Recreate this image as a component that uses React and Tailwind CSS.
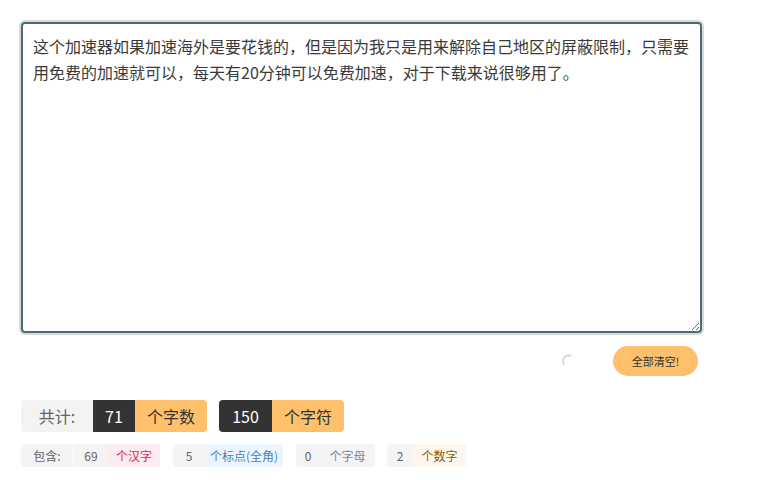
import { useState } from 'react'

const TEXT =
  '这个加速器如果加速海外是要花钱的，但是因为我只是用来解除自己地区的屏蔽限制，只需要用免费的加速就可以，每天有20分钟可以免费加速，对于下载来说很够用了。'

const font = { fontFamily: '"Microsoft YaHei", "Noto Sans CJK SC", "Noto Sans", sans-serif' }

// small tag pair: number + label
const Tag = ({ num, label, numW, labelW, labelClass }) => (
  <div className="flex h-[23px] items-stretch rounded-[3px] overflow-hidden text-[12px]">
    <span className={`flex items-center justify-center bg-[#f4f4f5] text-[#606266] ${numW}`}>{num}</span>
    <span className={`flex items-center justify-center ${labelW} ${labelClass}`}>{label}</span>
  </div>
)

const Spinner = () => (
  <svg width="14" height="14" viewBox="0 0 14 14" className="mr-[37px]">
    <path d="M2 10 A5.5 5.5 0 0 1 8.5 1.8" fill="none" stroke="#d9d9d9" strokeWidth="2" strokeLinecap="round" />
  </svg>
)

export default function App() {
  const [text, setText] = useState(TEXT)

  return (
    <div className="min-h-screen bg-white pl-[21px] pt-[22px]" style={font}>
      <div className="w-[681px]">
        {/* Input */}
        <textarea
          value={text}
          onChange={(e) => setText(e.target.value)}
          className="block h-[311px] w-full rounded-[4px] border-2 border-[#4e6a72] pt-[9px] pl-[10px] pr-[6px] text-[16px] leading-[26px] text-[#3a3a3a] shadow-[0_0_0_2px_#d4dcdf] outline-none"
          style={font}
        />

        {/* Actions */}
        <div className="mt-[13px] flex items-center justify-end pr-[4px]">
          <Spinner />
          <button className="h-[30px] w-[85px] rounded-full bg-[#ffc06b] text-[11px] text-[#333]">
            全部清空!
          </button>
        </div>

        {/* Totals */}
        <div className="mt-[24px] flex items-center gap-[12px] text-[16px]">
          <div className="flex h-[32px] items-stretch rounded-[4px] overflow-hidden">
            <span className="flex w-[72px] items-center justify-center bg-[#f3f3f3] text-[#606266]">共计:</span>
            <span className="flex w-[42px] items-center justify-center bg-[#333333] text-white">71</span>
            <span className="flex w-[72px] items-center justify-center bg-[#ffc06b] text-[#333]">个字数</span>
          </div>
          <div className="flex h-[32px] items-stretch rounded-[4px] overflow-hidden">
            <span className="flex w-[53px] items-center justify-center bg-[#333333] text-white">150</span>
            <span className="flex w-[72px] items-center justify-center bg-[#ffc06b] text-[#333]">个字符</span>
          </div>
        </div>

        {/* Breakdown */}
        <div className="mt-[12px] flex items-center">
          <div className="flex h-[23px] items-stretch text-[12px]">
            <span className="flex w-[52px] items-center justify-center rounded-l-[3px] bg-[#f4f4f5] text-[#606266]">包含:</span>
            <span className="flex w-[35px] items-center justify-center bg-[#f4f4f5] text-[#606266] border-l border-white">69</span>
            <span className="flex w-[52px] items-center justify-center rounded-r-[3px] bg-[#fdecef] text-[#e0285a]">个汉字</span>
          </div>
          <div className="ml-[13px]">
            <Tag num="5" numW="w-[32px]" label="个标点(全角)" labelW="w-[78px]" labelClass="bg-[#ecf5ff] text-[#4a83b5]" />
          </div>
          <div className="ml-[13px]">
            <Tag num="0" numW="w-[24px]" label="个字母" labelW="w-[55px]" labelClass="bg-[#f4f4f5] text-[#7b8494]" />
          </div>
          <div className="ml-[12px]">
            <Tag num="2" numW="w-[26px]" label="个数字" labelW="w-[53px]" labelClass="bg-[#fdf6ec] text-[#8a5a12]" />
          </div>
        </div>
      </div>
    </div>
  )
}
